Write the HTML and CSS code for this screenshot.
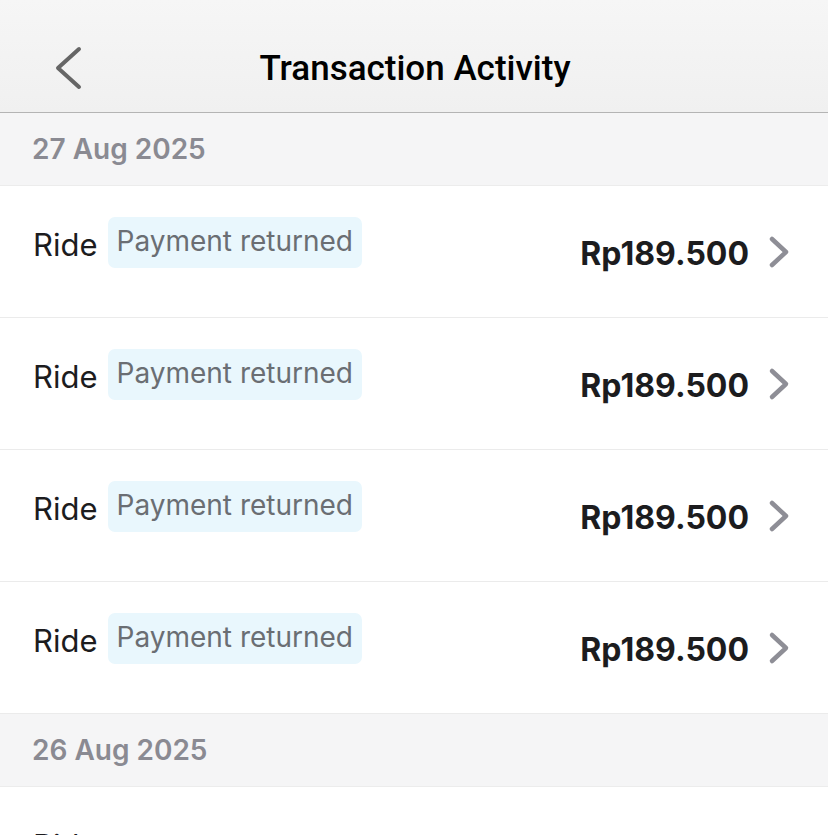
FILE: index.html
```html
<!DOCTYPE html>
<html lang="en">
<head>
    <meta charset="UTF-8" />
    <title>Transaction Activity</title>
    <link rel="stylesheet" href="styles.css">
</head>
<body>

<div class="topbar">
    <span class="back">
        <svg width="30" height="46" viewBox="0 0 30 46">
            <path d="M25 4 L4 23 L25 42" fill="none" stroke="#666" stroke-width="4" stroke-linecap="round" stroke-linejoin="round"/>
        </svg>
    </span>
    <h1 class="title">Transaction Activity</h1>
</div>

<div class="day">27 Aug 2025</div>

<div class="row">
    <span class="kind">Ride</span>
    <span class="badge">Payment returned</span>
    <span class="amount">Rp189.500</span>
    <svg class="chev" width="22" height="34" viewBox="0 0 22 34">
        <path d="M4 4 L18 17 L4 30" fill="none" stroke="#8e8e96" stroke-width="4.5" stroke-linecap="round" stroke-linejoin="round"/>
    </svg>
</div>
<div class="row">
    <span class="kind">Ride</span>
    <span class="badge">Payment returned</span>
    <span class="amount">Rp189.500</span>
    <svg class="chev" width="22" height="34" viewBox="0 0 22 34">
        <path d="M4 4 L18 17 L4 30" fill="none" stroke="#8e8e96" stroke-width="4.5" stroke-linecap="round" stroke-linejoin="round"/>
    </svg>
</div>
<div class="row">
    <span class="kind">Ride</span>
    <span class="badge">Payment returned</span>
    <span class="amount">Rp189.500</span>
    <svg class="chev" width="22" height="34" viewBox="0 0 22 34">
        <path d="M4 4 L18 17 L4 30" fill="none" stroke="#8e8e96" stroke-width="4.5" stroke-linecap="round" stroke-linejoin="round"/>
    </svg>
</div>
<div class="row">
    <span class="kind">Ride</span>
    <span class="badge">Payment returned</span>
    <span class="amount">Rp189.500</span>
    <svg class="chev" width="22" height="34" viewBox="0 0 22 34">
        <path d="M4 4 L18 17 L4 30" fill="none" stroke="#8e8e96" stroke-width="4.5" stroke-linecap="round" stroke-linejoin="round"/>
    </svg>
</div>

<div class="day">26 Aug 2025</div>

<div class="row">
    <span class="kind">Ride</span>
</div>

</body>
</html>
```

FILE: styles.css
```css
body, html {
    margin: 0;
    background-color: #fff;
    font-family: Inter, "Noto Sans", sans-serif;
    color: #1c1c1e;
    overflow: hidden;
    height: 835px;
}

.topbar {
    height: 113px;
    background: linear-gradient(180deg, #f6f6f6 0%, #f0f0f0 100%);
    border-bottom: 1px solid #b4b4b4;
    display: flex;
    align-items: center;
    justify-content: center;
    position: relative;
    box-sizing: border-box;
    padding-top: 24px;
}

.back {
    position: absolute;
    left: 54px;
    top: 45px;
}

.back svg {
    display: block;
}

.title {
    margin: 0 0 0 2px;
    font-family: Roboto, sans-serif;
    font-weight: 500;
    font-size: 35px;
    color: #000;
}

.day {
    height: 72px;
    background-color: #f5f5f6;
    border-bottom: 1px solid #ececec;
    padding-left: 32px;
    display: flex;
    align-items: center;
    font-size: 28px;
    font-weight: 600;
    color: #8a8a92;
}

.row {
    height: 131px;
    border-bottom: 1px solid #ebebeb;
    display: flex;
    align-items: center;
    padding: 0 38px 0 33px;
}

.kind {
    font-size: 31px;
    color: #1c1c1e;
    margin-right: 10px;
    margin-bottom: 14px;
}

.badge {
    background-color: #e9f7fd;
    border-radius: 7px;
    color: #6a6e73;
    font-size: 28px;
    padding: 7px 9px 10px 9px;
    margin-bottom: 18px;
}

.amount {
    margin-left: auto;
    font-size: 32px;
    font-weight: 700;
    color: #1c1c1e;
    margin-right: 19px;
    margin-top: 4px;
}

.chev {
    display: block;
}
```
